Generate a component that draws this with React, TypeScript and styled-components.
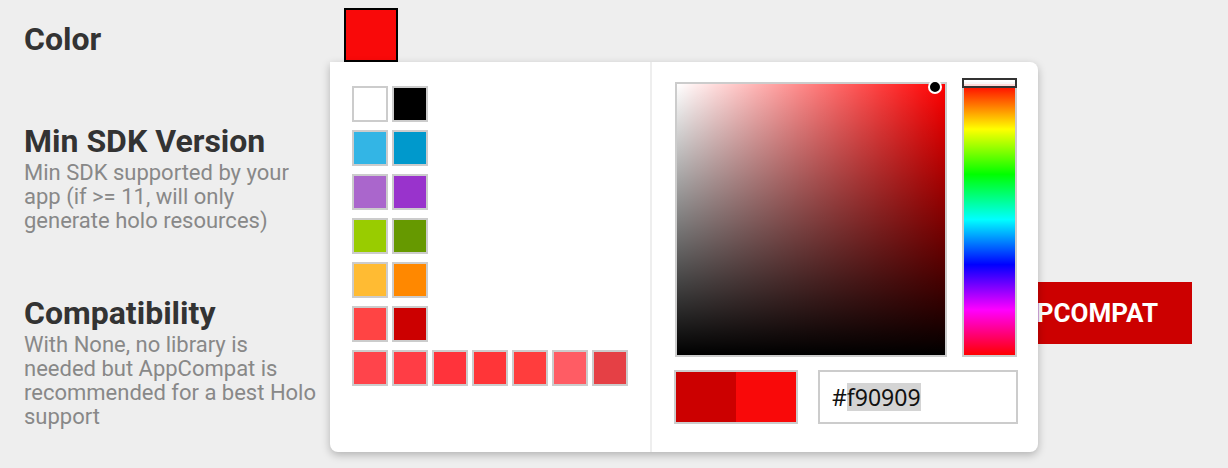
import React from "react";
import styled, { createGlobalStyle } from "styled-components";

const GlobalStyle = createGlobalStyle`
  html, body { margin: 0; padding: 0; }
  body {
    background: #eeeeee;
    font-family: Roboto, "Liberation Sans", Arial, sans-serif;
    width: 1228px;
    height: 468px;
    overflow: hidden;
  }
`;

const Page = styled.div`
  position: relative;
  width: 1228px;
  height: 468px;
`;

const Form = styled.div`
  display: flex;
  flex-direction: column;
  padding: 0 36px 0 24px;
`;

const Row = styled.div<{ $top: number }>`
  display: grid;
  grid-template-columns: 320px 1fr;
  align-items: start;
  margin-top: ${(p) => p.$top}px;
`;

const LabelBlock = styled.div<{ $pt?: number }>`
  display: flex;
  flex-direction: column;
  padding-top: ${(p) => p.$pt ?? 0}px;
`;

const Title = styled.div`
  font-size: 32px;
  line-height: 32px;
  font-weight: 700;
  color: #333333;
`;

const Desc = styled.div`
  margin-top: 4px;
  font-size: 22px;
  line-height: 24px;
  color: #888888;
  width: 295px;
`;

const Swatch = styled.div<{ $color: string }>`
  width: 50px;
  height: 50px;
  border: 2px solid #000;
  background: ${(p) => p.$color};
`;

const ButtonGroupWrap = styled.div`
  position: absolute;
  top: 282px;
  right: 36px;
`;

const ButtonGroup = styled.div`
  display: flex;
  gap: 12px;
`;

const Toggle = styled.div<{ $active?: boolean }>`
  height: 62px;
  padding: 0 34px 0 35px;
  display: flex;
  align-items: center;
  font-size: 26px;
  font-weight: 700;
  color: ${(p) => (p.$active ? "#ffffff" : "#555555")};
  background: ${(p) => (p.$active ? "#cc0000" : "#dddddd")};
`;

const Popup = styled.div`
  position: absolute;
  left: 330px;
  top: 62px;
  width: 708px;
  height: 390px;
  background: #ffffff;
  border-radius: 0 8px 8px 8px;
  box-shadow: 0 3px 8px rgba(0, 0, 0, 0.25);
  display: flex;
`;

const Palette = styled.div`
  width: 322px;
  box-sizing: border-box;
  padding: 24px 22px;
  display: flex;
  flex-direction: column;
  gap: 8px;
  border-right: 2px solid #eeeeee;
`;

const PaletteRow = styled.div`
  display: flex;
  gap: 4px;
`;

const Chip = styled.div<{ $color: string }>`
  width: 32px;
  height: 32px;
  border: 2px solid #cccccc;
  background: ${(p) => p.$color};
`;

const Picker = styled.div`
  flex: 1;
  box-sizing: border-box;
  padding: 20px 21px 28px 23px;
  display: flex;
  flex-direction: column;
  gap: 13px;
`;

const PickerTop = styled.div`
  display: flex;
  gap: 15px;
`;

const SatVal = styled.div`
  position: relative;
  width: 268px;
  height: 271px;
  border: 2px solid #cccccc;
  background:
    linear-gradient(to top, #000, rgba(0, 0, 0, 0)),
    linear-gradient(to right, #fff, rgba(255, 255, 255, 0)),
    #ff0000;
`;

const Cursor = styled.div`
  position: absolute;
  width: 10px;
  height: 10px;
  border-radius: 50%;
  background: #000;
  border: 2px solid #fff;
  transform: translate(-50%, -50%);
`;

const HueBar = styled.div`
  position: relative;
  width: 51px;
  height: 271px;
  border: 2px solid #cccccc;
  background: linear-gradient(
    to bottom,
    #ff0000 0%,
    #ffff00 16.67%,
    #00ff00 33.33%,
    #00ffff 50%,
    #0000ff 66.67%,
    #ff00ff 83.33%,
    #ff0000 100%
  );
`;

const HueMarker = styled.div`
  position: absolute;
  left: -2px;
  right: -2px;
  top: -6px;
  height: 6px;
  border: 2px solid #333333;
  background: rgba(255, 255, 255, 0.85);
`;

const PickerBottom = styled.div`
  display: flex;
  gap: 20px;
`;

const Preview = styled.div`
  display: flex;
  width: 120px;
  height: 50px;
  border: 2px solid #cccccc;
  margin-left: -1px;
`;

const PreviewHalf = styled.div<{ $color: string }>`
  flex: 1;
  background: ${(p) => p.$color};
`;

const HexField = styled.div`
  height: 50px;
  width: 184px;
  border: 2px solid #cccccc;
  display: flex;
  align-items: center;
  padding-left: 12px;
  font-family: "Noto Sans", "Open Sans", sans-serif;
  font-size: 23px;
  color: #111111;
`;

const Selected = styled.span`
  background: #d4d4d4;
  display: inline-block;
  line-height: 28px;
`;

const palette = [
  ["#ffffff", "#000000"],
  ["#33b5e5", "#0099cc"],
  ["#aa66cc", "#9933cc"],
  ["#99cc00", "#669900"],
  ["#ffbb33", "#ff8800"],
  ["#ff4444", "#cc0000"],
  ["#ff444b", "#ff3d45", "#ff333b", "#ff3538", "#ff3d3d", "#ff5c64", "#e54045"],
];

export default function App() {
  const s = 0.964;
  const v = 0.99;
  return (
    <Page>
      <GlobalStyle />
      <Form>
        <Row $top={8}>
          <LabelBlock $pt={15}>
            <Title>Color</Title>
          </LabelBlock>
          <Swatch $color="#f90909" />
        </Row>
        <Row $top={63}>
          <LabelBlock>
            <Title>Min SDK Version</Title>
            <Desc>Min SDK supported by your app (if &gt;= 11, will only generate holo resources)</Desc>
          </LabelBlock>
        </Row>
        <Row $top={64}>
          <LabelBlock>
            <Title>Compatibility</Title>
            <Desc>With None, no library is needed but AppCompat is recommended for a best Holo support</Desc>
          </LabelBlock>
        </Row>
      </Form>
      <ButtonGroupWrap>
        <ButtonGroup>
          <Toggle>NONE</Toggle>
          <Toggle $active>APPCOMPAT</Toggle>
        </ButtonGroup>
      </ButtonGroupWrap>
      <Popup>
        <Palette>
          {palette.map((row, i) => (
            <PaletteRow key={i}>
              {row.map((c, j) => (
                <Chip key={j} $color={c} />
              ))}
            </PaletteRow>
          ))}
        </Palette>
        <Picker>
          <PickerTop>
            <SatVal>
              <Cursor style={{ left: `${s * 100}%`, top: `${(1 - v) * 100}%` }} />
            </SatVal>
            <HueBar>
              <HueMarker />
            </HueBar>
          </PickerTop>
          <PickerBottom>
            <Preview>
              <PreviewHalf $color="#cc0000" />
              <PreviewHalf $color="#f90909" />
            </Preview>
            <HexField>
              #<Selected>f90909</Selected>
            </HexField>
          </PickerBottom>
        </Picker>
      </Popup>
    </Page>
  );
}
